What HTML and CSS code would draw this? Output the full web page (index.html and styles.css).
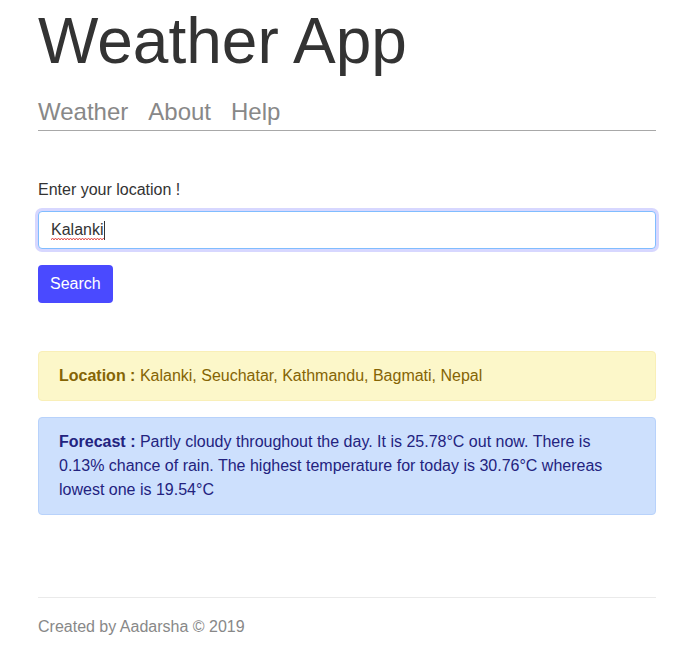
FILE: index.html
```html
<!DOCTYPE html>
<html>
<head>
<meta charset="utf-8">
<link rel="stylesheet" href="styles.css">
</head>
<body>
<div class="page">
  <header class="header">
    <h1 class="title">Weather App</h1>
    <nav class="nav">
      <a class="nav-link" href="#">Weather</a>
      <a class="nav-link" href="#">About</a>
      <a class="nav-link" href="#">Help</a>
    </nav>
  </header>
  <main class="main">
    <form class="form">
      <label class="label" for="loc">Enter your location !</label>
      <div class="input-wrap">
        <input id="loc" class="input" type="text" value="Kalanki">
        <svg class="spell" width="54" height="4" viewBox="0 0 54 4"><path d="M0 3 L1.5 1 L3 3 L4.5 1 L6 3 L7.5 1 L9 3 L10.5 1 L12 3 L13.5 1 L15 3 L16.5 1 L18 3 L19.5 1 L21 3 L22.5 1 L24 3 L25.5 1 L27 3 L28.5 1 L30 3 L31.5 1 L33 3 L34.5 1 L36 3 L37.5 1 L39 3 L40.5 1 L42 3 L43.5 1 L45 3 L46.5 1 L48 3 L49.5 1 L51 3 L52.5 1 L54 3" fill="none" stroke="#e0413a" stroke-width="0.9"/></svg>
        <span class="caret"></span>
      </div>
      <button class="btn" type="button">Search</button>
    </form>
    <div class="alert alert-warning"><strong>Location :</strong> Kalanki, Seuchatar, Kathmandu, Bagmati, Nepal</div>
    <div class="alert alert-info"><strong>Forecast :</strong> Partly cloudy throughout the day. It is 25.78°C out now. There is 0.13% chance of rain. The highest temperature for today is 30.76°C whereas lowest one is 19.54°C</div>
  </main>
  <footer class="footer">Created by Aadarsha © 2019</footer>
</div>
</body>
</html>
```

FILE: styles.css
```css
html, body {
  margin: 0;
  padding: 0;
  background: #fff;
}
body {
  font-family: "Liberation Sans", Arial, sans-serif;
  color: #333;
}
.page {
  margin: 0 21px 0 38px;
  display: flex;
  flex-direction: column;
}
.title {
  margin: 5px 0 0 0;
  font-size: 64px;
  font-weight: 400;
  line-height: 73px;
  color: #333;
}
.nav {
  display: flex;
  gap: 20px;
  margin-top: 20px;
  padding-bottom: 4px;
  border-bottom: 1px solid #a8a8a8;
}
.nav-link {
  font-size: 24px;
  line-height: 28px;
  color: #888;
  text-decoration: none;
}
.main {
  display: flex;
  flex-direction: column;
}
.form {
  display: flex;
  flex-direction: column;
  align-items: flex-start;
  margin-top: 50px;
}
.label {
  font-size: 16px;
  line-height: 18px;
  color: #333;
}
.input-wrap {
  align-self: stretch;
  margin-top: 12px;
  position: relative;
}
.input {
  display: block;
  box-sizing: border-box;
  width: 100%;
  height: 38px;
  padding: 0 12px;
  font-family: "Liberation Sans", Arial, sans-serif;
  font-size: 16px;
  color: #333;
  border: 1px solid #80bdff;
  border-radius: 4px;
  box-shadow: 0 0 0 3px rgba(74, 74, 255, 0.22);
  outline: none;
}
.spell {
  position: absolute;
  left: 13px;
  top: 26px;
}
.caret {
  position: absolute;
  left: 66px;
  top: 10px;
  width: 1px;
  height: 19px;
  background: #333;
}
.btn {
  margin-top: 16px;
  height: 38px;
  padding: 0 12px;
  background: #4a4aff;
  color: #fff;
  border: none;
  border-radius: 4px;
  font-family: "Liberation Sans", Arial, sans-serif;
  font-size: 16px;
}
.alert {
  box-sizing: border-box;
  padding: 12px 20px;
  font-size: 16px;
  line-height: 24px;
  border: 1px solid transparent;
  border-radius: 4px;
}
.alert-warning {
  margin-top: 48px;
  background: #fcf7c9;
  border-color: #f9efb8;
  color: #856404;
}
.alert-info {
  margin-top: 16px;
  background: #cde0fd;
  border-color: #b8d2fb;
  color: #23237f;
}
.footer {
  margin-top: 82px;
  padding-top: 20px;
  border-top: 1px solid #eaeaea;
  font-size: 16px;
  line-height: 18px;
  color: #888;
}
```
